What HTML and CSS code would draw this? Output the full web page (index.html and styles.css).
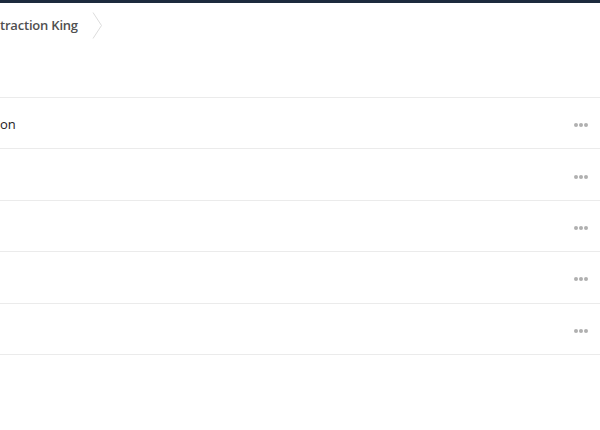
FILE: index.html
```html
<!DOCTYPE html>
<html>
<head>
<meta charset="utf-8">
<link rel="stylesheet" href="styles.css">
</head>
<body>
<div class="topbar"></div>
<div class="page">
  <nav class="crumbs">
    <span class="crumb">traction King</span>
    <svg class="chev" width="11" height="27" viewBox="0 0 11 27"><path d="M1 0.5 L9.5 13.5 L1 26.5" fill="none" stroke="#dcdcdc" stroke-width="1"/></svg>
  </nav>
  <div class="list">
    <div class="row"><span class="name">on</span><span class="more"><i></i><i></i><i></i></span></div>
    <div class="row"><span class="name"></span><span class="more"><i></i><i></i><i></i></span></div>
    <div class="row"><span class="name"></span><span class="more"><i></i><i></i><i></i></span></div>
    <div class="row"><span class="name"></span><span class="more"><i></i><i></i><i></i></span></div>
    <div class="row"><span class="name"></span><span class="more"><i></i><i></i><i></i></span></div>
  </div>
</div>
</body>
</html>
```
FILE: styles.css
```css
html, body {
  margin: 0;
  padding: 0;
  background: #fff;
  font-family: "Open Sans", "Liberation Sans", sans-serif;
  overflow: hidden;
}
.topbar {
  height: 3px;
  background: #1d2a3d;
}
.page {
  width: 600px;
}
.crumbs {
  display: flex;
  align-items: center;
  height: 45px;
}
.crumb {
  font-size: 13px;
  font-weight: 600;
  color: #505050;
  line-height: 18px;
  letter-spacing: -0.2px;
  margin-top: -2px;
}
.chev {
  margin-left: 14px;
  display: block;
  margin-top: -1px;
}
.list {
  margin-top: 49px;
  border-top: 1px solid #ebebeb;
}
.row {
  display: flex;
  align-items: center;
  justify-content: space-between;
  height: 50.4px;
  border-bottom: 1px solid #ebebeb;
  box-sizing: content-box;
}
.name {
  font-size: 13px;
  color: #222;
  margin-top: 2px;
}
.more {
  display: flex;
  gap: 1px;
  margin-right: 12px;
  margin-top: 4px;
}
.more i {
  display: block;
  width: 4px;
  height: 4px;
  border-radius: 50%;
  background: #b0b0b0;
}
```
